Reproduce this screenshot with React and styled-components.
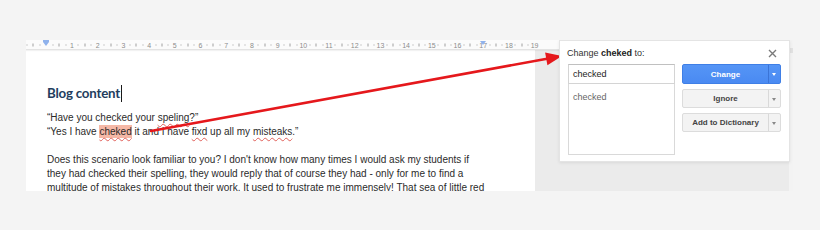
import React from 'react'
import styled, { createGlobalStyle } from 'styled-components';

const GlobalStyle = createGlobalStyle`
  html, body {
    margin: 0;
    background: #f4f4f4;
    font-family: "Liberation Sans", Arial, sans-serif;
  }
`;

const UNIT = 25.7;
const ORIGIN = 20.3;

const rulerMarks = () => {
    const marks = [];
    for (let q = -3; q <= 76; q++) {
        const pos = q / 4;
        let kind = 'dot';
        if (q % 4 === 0) kind = q === 0 ? null : 'num';
        else if (q % 2 === 0) kind = 'tick';
        if (kind) marks.push({ pos, kind, left: ORIGIN + pos * UNIT });
    }
    return marks;
};

const App = () => {
    return (
        <>
            <GlobalStyle />
            <Stage>
                <DocWindow>
                    <Main>
                        <Ruler>
                            {rulerMarks().map((m) => (
                                <Mark key={m.pos} $kind={m.kind} style={{ left: m.left }}>
                                    {m.kind === 'num' ? m.pos : null}
                                </Mark>
                            ))}
                            <Indent style={{ left: ORIGIN }} $first />
                            <Indent style={{ left: ORIGIN + 17 * UNIT }} />
                        </Ruler>
                        <Body>
                            <Page>
                                <Heading>Blog content<Caret /></Heading>
                                <Line>“Have you checked your <Typo>speling</Typo>?”</Line>
                                <Line>“Yes I have <Typo $selected>cheked</Typo> it and I have <Typo>fixd</Typo> up all my <Typo>misteaks</Typo>.”</Line>
                                <Line>&nbsp;</Line>
                                <Line>Does this scenario look familiar to you? I don't know how many times I would ask my students if</Line>
                                <Line>they had checked their spelling, they would reply that of course they had - only for me to find a</Line>
                                <Line>multitude of mistakes throughout their work. It used to frustrate me immensely! That sea of little red</Line>
                            </Page>
                            <Side />
                        </Body>
                    </Main>
                    <ScrollTrack><Thumb /></ScrollTrack>

                    <Dialog>
                        <Title>Change <b>cheked</b> to:</Title>
                        <Close>
                            <svg width="9" height="9" viewBox="0 0 9 9">
                                <path d="M1 1L8 8M8 1L1 8" stroke="#7a7a7a" strokeWidth="1.4" fill="none" />
                            </svg>
                        </Close>
                        <DialogGrid>
                            <Suggestions>
                                <WordInput>checked</WordInput>
                                <WordList>
                                    <WordItem>checked</WordItem>
                                </WordList>
                            </Suggestions>
                            <Actions>
                                <SplitButton $primary $tall>
                                    <ButtonLabel>Change</ButtonLabel>
                                    <ButtonArrow $primary />
                                </SplitButton>
                                <SplitButton>
                                    <ButtonLabel>Ignore</ButtonLabel>
                                    <ButtonArrow />
                                </SplitButton>
                                <SplitButton>
                                    <ButtonLabel>Add to Dictionary</ButtonLabel>
                                    <ButtonArrow />
                                </SplitButton>
                            </Actions>
                        </DialogGrid>
                    </Dialog>
                </DocWindow>

                <ArrowLayer width="820" height="230" viewBox="0 0 820 230">
                    <line x1="151" y1="131" x2="547" y2="58.8" stroke="#e5181c" strokeWidth="2.6" strokeLinecap="round" />
                    <polygon points="562,56 547.4,65.3 545.1,52.5" fill="#e5181c" />
                </ArrowLayer>
            </Stage>
        </>
    )
}

export default App;

const Stage = styled.div`
position: relative;
width: 820px;
height: 230px;
box-sizing: border-box;
padding: 40px 0 0 26px;
overflow: hidden;
`;

const DocWindow = styled.div`
position: relative;
width: 767px;
height: 151px;
display: flex;
overflow: hidden;
`;

const Main = styled.div`
flex: 1;
display: flex;
flex-direction: column;
min-width: 0;
`;

const Ruler = styled.div`
position: relative;
flex: none;
height: 9px;
background: #fbfbfb;
border-bottom: 1px solid #e3e3e3;
box-shadow: 0 1px 1px rgba(0,0,0,0.05);
z-index: 1;
`;

const Mark = styled.span`
position: absolute;
top: 50%;
transform: translate(-50%, -50%);
color: #8c8c8c;
font-size: 7px;
line-height: 7px;
${({ $kind }) => $kind === 'dot' && `
    width: 1px;
    height: 1px;
    background: #a0a0a0;
`}
${({ $kind }) => $kind === 'tick' && `
    width: 1px;
    height: 3px;
    background: #a0a0a0;
`}
`;

const Indent = styled.span`
position: absolute;
top: 1px;
width: 0;
height: 0;
margin-left: -3px;
border-left: 3px solid transparent;
border-right: 3px solid transparent;
border-top: 4px solid #8fb2ec;
${({ $first }) => $first && `
    top: 2px;
    &::before {
        content: '';
        position: absolute;
        left: -3px;
        top: -6px;
        width: 6px;
        height: 2px;
        background: #8fb2ec;
    }
`}
`;

const Body = styled.div`
flex: 1;
display: flex;
min-height: 0;
`;

const Page = styled.div`
width: 509px;
flex: none;
background: #fff;
box-sizing: border-box;
padding: 35px 0 0 21px;
overflow: hidden;
color: #2b2b2b;
`;

const Side = styled.div`
flex: 1;
background: #ebebeb;
`;

const ScrollTrack = styled.div`
width: 4px;
flex: none;
background: #f3f3f3;
padding-top: 8px;
`;

const Thumb = styled.div`
height: 5px;
background: #e2e2e2;
`;

const Heading = styled.h1`
margin: 0 0 9px;
font-family: Lato, "Open Sans", sans-serif;
font-weight: 700;
font-size: 13.3px;
line-height: 16px;
letter-spacing: -0.2px;
color: #223d5e;
white-space: nowrap;
`;

const Caret = styled.span`
display: inline-block;
width: 1px;
height: 17px;
margin-left: 1px;
background: #1a1a1a;
vertical-align: -4px;
`;

const Line = styled.div`
font-size: 10px;
line-height: 14px;
white-space: nowrap;
`;

const Typo = styled.span`
text-decoration: underline wavy #e0605a;
text-decoration-thickness: 1px;
text-underline-offset: 2px;
${({ $selected }) => $selected && `
    background: #f5b8a6;
    padding: 1px 0;
`}
`;

const ArrowLayer = styled.svg`
position: absolute;
left: 0;
top: 0;
pointer-events: none;
`;

const Dialog = styled.div`
position: absolute;
left: 533px;
top: 0;
width: 231px;
height: 122px;
box-sizing: border-box;
padding: 7px 10px 0 7px;
background: #fff;
border: 1px solid #e4e4e4;
box-shadow: 0 1px 3px rgba(0,0,0,0.08);
z-index: 2;
`;

const Title = styled.div`
font-size: 9px;
line-height: 11px;
color: #333;
margin-bottom: 5px;

b {
    font-weight: 700;
    color: #222;
}
`;

const Close = styled.div`
position: absolute;
right: 12px;
top: 8px;
width: 9px;
height: 9px;
display: flex;

svg {
    display: block;
}
`;

const DialogGrid = styled.div`
display: grid;
grid-template-columns: 107px 99px;
column-gap: 7px;
padding-left: 1px;
`;

const Suggestions = styled.div`
display: flex;
flex-direction: column;
`;

const WordInput = styled.div`
height: 20px;
box-sizing: border-box;
border: 1px solid #d4d4d4;
border-top-color: #c0c0c0;
padding-left: 4px;
font-size: 9px;
line-height: 18px;
color: #222;
`;

const WordList = styled.div`
height: 71px;
box-sizing: border-box;
border: 1px solid #d9d9d9;
border-top: none;
padding: 8px 0 0 4px;
`;

const WordItem = styled.div`
font-size: 9px;
line-height: 11px;
color: #666;
`;

const Actions = styled.div`
display: flex;
flex-direction: column;
gap: 5px;
`;

const SplitButton = styled.div`
display: flex;
height: ${({ $tall }) => ($tall ? '20px' : '19px')};
box-sizing: border-box;
border-radius: 2px;
border: 1px solid ${({ $primary }) => ($primary ? '#3f7fe6' : '#dcdcdc')};
background: ${({ $primary }) => ($primary ? 'linear-gradient(#5595f6, #4a8af2)' : '#f3f3f3')};
color: ${({ $primary }) => ($primary ? '#fff' : '#444')};
`;

const ButtonLabel = styled.div`
width: 85px;
flex: none;
display: flex;
align-items: center;
justify-content: center;
font-size: 8px;
font-weight: 700;
`;

const ButtonArrow = styled.div`
flex: 1;
position: relative;
border-left: 1px solid ${({ $primary }) => ($primary ? '#3b74d6' : '#d9d9d9')};

&::after {
    content: '';
    position: absolute;
    left: 50%;
    top: 50%;
    margin: -1px 0 0 -2.5px;
    border-left: 2.5px solid transparent;
    border-right: 2.5px solid transparent;
    border-top: 3px solid ${({ $primary }) => ($primary ? '#fff' : '#888')};
}
`;
